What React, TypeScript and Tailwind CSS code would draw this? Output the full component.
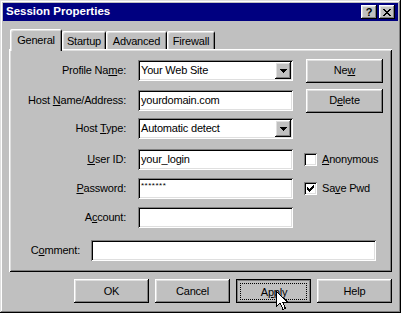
import React from 'react';

const raised =
  'shadow-[inset_-1px_-1px_0_#000,inset_1px_1px_0_#fff,inset_-2px_-2px_0_#808080,inset_2px_2px_0_#dfdfdf]';
const sunken =
  'shadow-[inset_1px_1px_0_#808080,inset_-1px_-1px_0_#fff,inset_2px_2px_0_#000,inset_-2px_-2px_0_#dfdfdf]';
const tabEdge =
  'shadow-[inset_1px_1px_0_#fff,inset_-1px_0_0_#000,inset_2px_2px_0_#dfdfdf,inset_-2px_0_0_#808080]';

function U({ children }: { children: React.ReactNode }) {
  return <span className="underline underline-offset-[1px] decoration-1">{children}</span>;
}

function Arrow() {
  return (
    <svg width="7" height="4" viewBox="0 0 7 4" shapeRendering="crispEdges">
      <rect x="0" y="0" width="7" height="1" fill="#000" />
      <rect x="1" y="1" width="5" height="1" fill="#000" />
      <rect x="2" y="2" width="3" height="1" fill="#000" />
      <rect x="3" y="3" width="1" height="1" fill="#000" />
    </svg>
  );
}

function CloseGlyph() {
  const rows = ['11000011', '01100110', '00111100', '00011000', '00111100', '01100110', '11000011'];
  return (
    <svg width="8" height="7" viewBox="0 0 8 7" shapeRendering="crispEdges">
      {rows.map((r, y) =>
        r.split('').map((c, x) => (c === '1' ? <rect key={`${x}-${y}`} x={x} y={y} width="1" height="1" fill="#000" /> : null))
      )}
    </svg>
  );
}

function CheckGlyph() {
  const rows = ['0000001', '0000011', '1000111', '1101110', '1111100', '0111000', '0010000'];
  return (
    <svg width="7" height="7" viewBox="0 0 7 7" shapeRendering="crispEdges">
      {rows.map((r, y) =>
        r.split('').map((c, x) => (c === '1' ? <rect key={`${x}-${y}`} x={x} y={y} width="1" height="1" fill="#000" /> : null))
      )}
    </svg>
  );
}

function Combo({ value }: { value: string }) {
  return (
    <div className={`w-[155px] h-[21px] bg-white ${sunken} flex items-center pl-[3px] pr-[2px]`}>
      <span className="flex-1">{value}</span>
      <div className={`w-[16px] h-[17px] bg-[#c0c0c0] ${raised} flex items-center justify-center`}>
        <Arrow />
      </div>
    </div>
  );
}

function Field({ value, width = 'w-[155px]' }: { value?: React.ReactNode; width?: string }) {
  return (
    <div className={`${width} h-[21px] bg-white ${sunken} flex items-center pl-[3px]`}>
      {value}
    </div>
  );
}

function Label({ children }: { children: React.ReactNode }) {
  return <div className="w-[118px] text-right pr-[1px]">{children}</div>;
}

function Check({ checked, children }: { checked?: boolean; children: React.ReactNode }) {
  return (
    <div className="flex items-center ml-[11px]">
      <div className={`w-[13px] h-[13px] bg-white ${sunken} flex items-center justify-center`}>
        {checked && <CheckGlyph />}
      </div>
      <span className="ml-[5px]">{children}</span>
    </div>
  );
}

export default function App() {
  return (
    <div
      className="relative w-[401px] h-[313px] bg-[#c0c0c0] p-[3px] text-[11px] tracking-[-0.2px] text-black font-['Liberation_Sans',Arial,sans-serif] shadow-[inset_-1px_-1px_0_#000,inset_1px_1px_0_#dfdfdf,inset_-2px_-2px_0_#808080,inset_2px_2px_0_#fff]"
    >
      {/* Title bar */}
      <div className="h-[18px] bg-[#000080] flex items-center justify-between pl-[3px] pr-[3px]">
        <span className="text-white font-bold text-[11.5px] tracking-normal">Session Properties</span>
        <div className="flex gap-[2px]">
          <div className={`w-[16px] h-[14px] bg-[#c0c0c0] ${raised} flex items-center justify-center font-bold text-[11px] leading-none`}>
            ?
          </div>
          <div className={`w-[16px] h-[14px] bg-[#c0c0c0] ${raised} flex items-center justify-center`}>
            <CloseGlyph />
          </div>
        </div>
      </div>

      {/* Tabs */}
      <div className="ml-[6px] mt-[8px] w-[383px]">
        <div className="flex items-start h-[20px] pl-[1px]">
          <div className={`relative z-10 w-[52px] h-[22px] bg-[#c0c0c0] rounded-t-[2px] ${tabEdge} flex justify-center pt-[3px]`}>
            General
          </div>
          <div className={`mt-[2px] w-[44px] h-[18px] rounded-t-[2px] ${tabEdge} flex justify-center pt-[2px]`}>Startup</div>
          <div className={`mt-[2px] w-[61px] h-[18px] rounded-t-[2px] ${tabEdge} flex justify-center pt-[2px]`}>Advanced</div>
          <div className={`mt-[2px] w-[48px] h-[18px] rounded-t-[2px] ${tabEdge} flex justify-center pt-[2px]`}>Firewall</div>
        </div>

        <div className="h-[223px] pt-[11px] shadow-[inset_1px_1px_0_#fff,inset_-1px_-1px_0_#000,inset_2px_2px_0_#dfdfdf,inset_-2px_-2px_0_#808080]">
          <div className="flex items-center h-[21px]">
            <Label>
              Profile Na<U>m</U>e:
            </Label>
            <div className="ml-[11px]">
              <Combo value="Your Web Site" />
            </div>
            <button className={`ml-[13px] w-[77px] h-[24px] ${raised}`}>
              Ne<U>w</U>
            </button>
          </div>

          <div className="flex items-center h-[21px] mt-[9px]">
            <Label>
              Host <U>N</U>ame/Address:
            </Label>
            <div className="ml-[11px]">
              <Field value="yourdomain.com" />
            </div>
            <button className={`ml-[13px] w-[77px] h-[24px] ${raised}`}>
              D<U>e</U>lete
            </button>
          </div>

          <div className="flex items-center h-[21px] mt-[7px]">
            <Label>
              Host <U>T</U>ype:
            </Label>
            <div className="ml-[11px]">
              <Combo value="Automatic detect" />
            </div>
          </div>

          <div className="flex items-center h-[21px] mt-[10px]">
            <Label>
              <U>U</U>ser ID:
            </Label>
            <div className="ml-[11px]">
              <Field value="your_login" />
            </div>
            <Check>
              <U>A</U>nonymous
            </Check>
          </div>

          <div className="flex items-center h-[21px] mt-[8px]">
            <Label>
              <U>P</U>assword:
            </Label>
            <div className="ml-[11px]">
              <Field value={<span className="self-start text-[8px] leading-none mt-[4px] tracking-[0.5px]">*******</span>} />
            </div>
            <Check checked>
              Sa<U>v</U>e Pwd
            </Check>
          </div>

          <div className="flex items-center h-[21px] mt-[8px]">
            <Label>
              A<U>c</U>count:
            </Label>
            <div className="ml-[11px]">
              <Field />
            </div>
          </div>

          <div className="flex items-center h-[21px] mt-[12px]">
            <div className="w-[71px] text-right">
              C<U>o</U>mment:
            </div>
            <div className="ml-[11px]">
              <Field width="w-[285px]" />
            </div>
          </div>
        </div>
      </div>

      {/* Buttons */}
      <div className="flex gap-[6px] pl-[71px] mt-[7px]">
        <button className={`w-[75px] h-[24px] ${raised}`}>OK</button>
        <button className={`w-[75px] h-[24px] ${raised}`}>Cancel</button>
        <button className="w-[75px] h-[24px] p-[4px] pb-[3px] shadow-[inset_0_0_0_1px_#000,inset_0_0_0_2px_#808080] flex">
          <span className="flex-1 border border-dotted border-black flex items-center justify-center pt-[1px] pl-[1px]">
            A<U>p</U>ply
          </span>
        </button>
        <button className={`w-[75px] h-[24px] ${raised}`}>Help</button>
      </div>

      {/* Mouse cursor */}
      <svg className="absolute left-[276px] top-[291px]" width="13" height="20" viewBox="0 0 13 20">
        <path
          d="M0.5 0.5 L0.5 15.5 L4 12 L7 18.5 L9.5 17.5 L6.5 11 L11.5 11 Z"
          fill="#fff"
          stroke="#000"
          strokeWidth="1"
          shapeRendering="crispEdges"
        />
      </svg>
    </div>
  );
}
